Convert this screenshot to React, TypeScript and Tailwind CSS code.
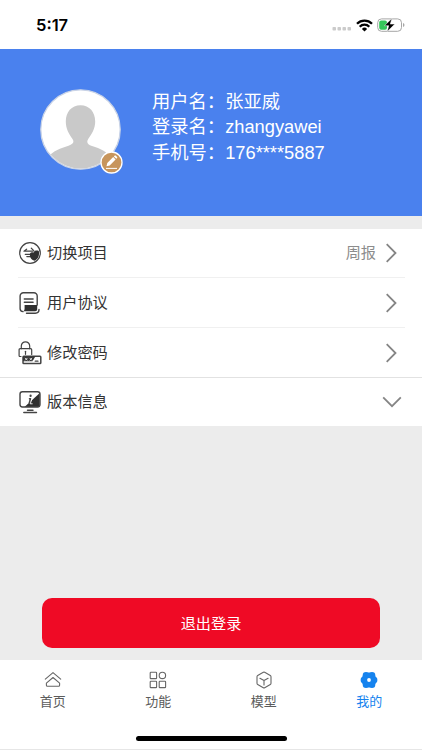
import type { ReactNode } from 'react';

interface RowProps {
  icon: ReactNode;
  label: string;
  value?: string;
  expand?: boolean;
}

const user = [
  { label: '用户名', value: '张亚威' },
  { label: '登录名', value: 'zhangyawei' },
  { label: '手机号', value: '176****5887' },
];

function SwitchIcon() {
  return (
    <svg width="24" height="24" viewBox="0 0 24 24" fill="none" stroke="#444" strokeWidth="1.2" strokeLinecap="round" strokeLinejoin="round">
      <circle cx="12" cy="12" r="10.3" />
      <path d="M6 10.2h9M6 10.2l2.6-2M7.3 13.4h5M8.8 15.6h4" strokeWidth="1.2" />
      <path d="M11.8 14c-.2-2.2 1.7-3.3 3.5-2.3 1-2.3 3.7-2.5 5.5-1.7.9 4.3-.6 8-4.2 9.800-2.900-.8-4.600-2.700-4.800-5.800z" fill="#303030" stroke="none" />
      <path d="M13.3 7.200l2.500 2.400" strokeWidth="1.2" />
    </svg>
  );
}

function AgreementIcon() {
  return (
    <svg width="24" height="24" viewBox="0 0 24 24" fill="none" stroke="#444" strokeWidth="1.4" strokeLinecap="round" strokeLinejoin="round">
      <path d="M5 20.6a3.2 3.2 0 0 1-2.9-3.2V5a3.3 3.3 0 0 1 3.3-3.3h10.500A3.3 3.3 0 0 1 19.200 5v9" />
      <path d="M6.3 8h8.800M6.3 11.300h8.800" />
      <path d="M6.600 14h12.600v4.300c0 1.200-.8 1.900-2 1.900H5.200c1-.5 1.400-1.500 1.400-3z" fill="#303030" stroke="none" />
      <path d="M8.5 22.200h8.800c2.300 0 3.700-1.200 3.700-3.700" />
    </svg>
  );
}

function PasswordIcon() {
  return (
    <svg width="24" height="24" viewBox="0 0 24 24" fill="none" stroke="#444" strokeWidth="1.2" strokeLinecap="round" strokeLinejoin="round">
      <path d="M3.3 7.700V5a4.200 4.200 0 0 1 8.400 0v2.700" />
      <path d="M3 15.500h-.8c-.7 0-1.100-.4-1.100-1.100V8.800c0-.7.4-1.100 1.100-1.100h10.400c.7 0 1.100.4 1.100 1.100v4.700" />
      <path d="M7.5 10.300v3" />
      <rect x="5" y="15.300" width="17.8" height="7.2" rx="0.8" strokeWidth="1.5" />
      <path d="M5 15.300h12.500l-3 5H5z" fill="#383838" stroke="none" />
      <path d="M7.300 17.200l1.900 1.900M9.200 17.200l-1.900 1.900M11.900 17.200l1.900 1.900M13.800 17.200l-1.900 1.900" stroke="#fff" strokeWidth="0.8" />
      <path d="M17.200 20.200h2.800" />
    </svg>
  );
}

function VersionIcon() {
  return (
    <svg width="24" height="24" viewBox="0 0 24 24" fill="none" stroke="#444" strokeWidth="1.4" strokeLinecap="round" strokeLinejoin="round">
      <path d="M21.800 3v13.900H6.500z" fill="#303030" stroke="none" />
      <rect x="2" y="1.8" width="20" height="15.2" rx="2.4" />
      <path d="M9.500 20.200h5.500M5.800 22.500h12.700" />
      <path d="M12.600 5.700v.2" strokeWidth="2.2" />
      <path d="M11.500 8.700h1l-1.200 4" strokeWidth="1.5" />
      <path d="M13.800 9.500l-1.600 4.300h2" stroke="#fff" strokeWidth="0.9" />
    </svg>
  );
}

function Row({ icon, label, value, expand }: RowProps) {
  return (
    <div className="flex-1 flex items-center pl-[18px] pr-5 text-[#333]">
      {icon}
      <span className="ml-[5px] flex-1 text-[15.2px] leading-5">{label}</span>
      {value && <span className="mr-[9px] text-[15.2px] leading-5 text-[#8c8c8c]">{value}</span>}
      {expand ? (
        <svg width="20" height="20" viewBox="0 0 20 20" fill="none" stroke="#858585" strokeWidth="1.8">
          <path d="M1.2 5.4L10 14.2l8.8-8.8" />
        </svg>
      ) : (
        <svg width="12" height="20" viewBox="0 0 12 20" className="mr-[5px]" fill="none" stroke="#858585" strokeWidth="1.8">
          <path d="M1.7 1.2l8.8 8.8-8.8 8.8" />
        </svg>
      )}
    </div>
  );
}

const tabs = [
  {
    label: '首页',
    icon: (
      <path d="M1.3 8.2L9 1.6l7.7 6.6M2.4 12.1L9 6.5l6.6 5.6v2.2c0 .7-.3 1-1 1H3.4c-.7 0-1-.3-1-1z" />
    ),
  },
  {
    label: '功能',
    icon: (
      <>
        <rect x="1.2" y="1.2" width="6.4" height="6.4" rx="0.7" />
        <circle cx="13.4" cy="4.4" r="3.2" />
        <rect x="1.2" y="10.2" width="6.4" height="6.4" rx="0.7" />
        <rect x="10.2" y="10.2" width="6.4" height="6.4" rx="0.7" />
      </>
    ),
  },
  {
    label: '模型',
    icon: (
      <path d="M8.3 1.3q.7-.4 1.4 0l5.6 3.2q.7.4.7 1.2v6.6q0 .8-.7 1.2l-5.6 3.2q-.7.4-1.4 0l-5.6-3.2q-.7-.4-.7-1.2V5.700q0-.8.7-1.200zM4.900 7.300L9 9.600l4.100-2.300M9 9.600v4.300" />
    ),
  },
  {
    label: '我的',
    active: true,
    icon: (
      <g fill="#1683ee" stroke="none">
        <circle cx="6" cy="4.2" r="3.3" />
        <circle cx="12" cy="4.2" r="3.3" />
        <circle cx="3.8" cy="9" r="3.2" />
        <circle cx="14.2" cy="9" r="3.2" />
        <circle cx="6" cy="13.8" r="3.3" />
        <circle cx="12" cy="13.8" r="3.3" />
        <circle cx="9" cy="9" r="7.6" />
        <circle cx="9" cy="9" r="1.9" fill="#fff" />
      </g>
    ),
  },
];

export default function App() {
  return (
    <div className="w-[422px] h-[750px] flex flex-col overflow-hidden bg-[#ececec] font-['Liberation_Sans','Noto_Sans_CJK_SC',sans-serif]">
      <div className="h-[49px] shrink-0 bg-white flex items-center pl-9 pr-[17px]">
        <span className="font-['Inter',sans-serif] text-[16.5px] leading-5 font-semibold text-black mt-px">5:17</span>
        <div className="ml-auto mt-px flex items-center">
          <svg width="20" height="6" viewBox="0 0 20 6" className="mt-[8px] mr-[4px]" fill="#cbcbcb">
            <rect x="0.5" y="1" width="3.5" height="3.5" rx="0.8" />
            <rect x="5.5" y="1" width="3.5" height="3.5" rx="0.8" />
            <rect x="10.5" y="1" width="3.5" height="3.5" rx="0.8" />
            <rect x="15.5" y="1" width="3.5" height="3.5" rx="0.8" />
          </svg>
          <svg width="17" height="13" viewBox="0 0 17 13" className="mr-1" fill="none" stroke="#000" strokeWidth="2.3">
            <path d="M1 4.7a10.7 10.7 0 0 1 15 0M3.7 7.700a6.800 6.800 0 0 1 9.600 0" />
            <path d="M8.500 12.400L5.900 9.900a3.700 3.700 0 0 1 5.200 0z" fill="#000" stroke="none" />
          </svg>
          <svg width="28" height="14" viewBox="0 0 28 14" fill="none">
            <rect x="0.7" y="0.9" width="23.8" height="12.4" rx="3.8" stroke="#a6a6a6" />
            <path d="M26 5v4q1.500-.6 1.500-2T26 5z" fill="#a6a6a6" />
            <rect x="2.2" y="2.4" width="7.8" height="9.4" rx="2" fill="#34c759" />
            <path d="M14.900.5L7.400 7.700h4.300l-1.400 5.800 7.500-7.400h-4.500z" fill="#000" stroke="#fff" strokeWidth="0.5" />
          </svg>
        </div>
      </div>

      <div className="h-[167px] shrink-0 bg-[#4a81ee] flex items-start pl-10">
        <div className="relative mt-10">
          <svg width="81" height="81" viewBox="0 0 81 81">
            <defs>
              <clipPath id="face"><circle cx="40.5" cy="40.5" r="39" /></clipPath>
            </defs>
            <circle cx="40.5" cy="40.5" r="39.7" fill="#fff" stroke="#c9d3e6" strokeWidth="1.3" />
            <path clipPath="url(#face)" fill="#c9c9c9" d="M40.5 16.200c9 0 14.700 6.700 14.700 16.300 0 7-3.300 12.300-7 17.500-2.100 3.300-.6 5.600 3.800 7 8.500 2.600 14.500 5 20 13v15H8V68c5.500-6.500 12.500-8.800 20.500-11.300 4.800-1.500 5.900-3.800 4-6.700-3.700-5.200-6.700-10.500-6.700-17.500 0-9.600 5.700-16.300 14.700-16.300z" />
          </svg>
          <svg width="23" height="23" viewBox="0 0 23 23" className="absolute left-[60px] top-[62px]">
            <circle cx="11.5" cy="11.5" r="10.5" fill="#c7955c" stroke="#fff" strokeWidth="1.3" />
            <path d="M6.500 15.200l.8-3.200 5.900-5.900 2.400 2.400-5.900 5.900zM13.900 5.400l.8-.8q.5-.4 1 0l1.400 1.400q.4.500 0 1l-.8.800z" fill="#fff" />
            <path d="M6 17.400h11" stroke="#fff" strokeWidth="1" />
          </svg>
        </div>
        <div className="ml-[31px] mt-[39.5px] text-white text-[18.3px] leading-[25.6px]">
          {user.map(u => (
            <div key={u.label}>{u.label}：{u.value}</div>
          ))}
        </div>
      </div>

      <div className="mt-[13px] h-[197px] shrink-0 bg-white flex flex-col">
        <div className="h-[48px] flex"><Row icon={<SwitchIcon />} label="切换项目" value="周报" /></div>
        <div className="h-px ml-[18px] mr-[17px] bg-[#f0f0f0]" />
        <div className="h-[49px] flex"><Row icon={<AgreementIcon />} label="用户协议" /></div>
        <div className="h-px ml-[18px] mr-[17px] bg-[#f0f0f0]" />
        <div className="h-[49px] flex"><Row icon={<PasswordIcon />} label="修改密码" /></div>
        <div className="h-px bg-[#e2e2e2]" />
        <div className="h-[48px] flex"><Row icon={<VersionIcon />} label="版本信息" expand /></div>
      </div>

      <button className="mt-auto mb-3 ml-[42px] w-[338px] h-[50px] pt-[2px] shrink-0 rounded-[10px] bg-[#ef0a25] text-white text-[15.2px]">
        退出登录
      </button>

      <div className="h-[90px] shrink-0 bg-white flex flex-col border-b border-[#e6e6e6]">
        <div className="flex h-[76px]">
          {tabs.map(t => (
            <div
              key={t.label}
              className={`flex-1 flex flex-col items-center pt-[11px] text-[13px] leading-5 ${t.active ? 'text-[#1683ee]' : 'text-[#5c5c5c]'}`}
            >
              <svg width="18" height="18" viewBox="0 0 18 18" fill="none" stroke="#666" strokeWidth="1.1" strokeLinejoin="round" strokeLinecap="round">
                {t.icon}
              </svg>
              <span className="mt-[3px]">{t.label}</span>
            </div>
          ))}
        </div>
        <div className="mx-auto w-[151px] h-[5px] rounded-full bg-black" />
      </div>
    </div>
  );
}
